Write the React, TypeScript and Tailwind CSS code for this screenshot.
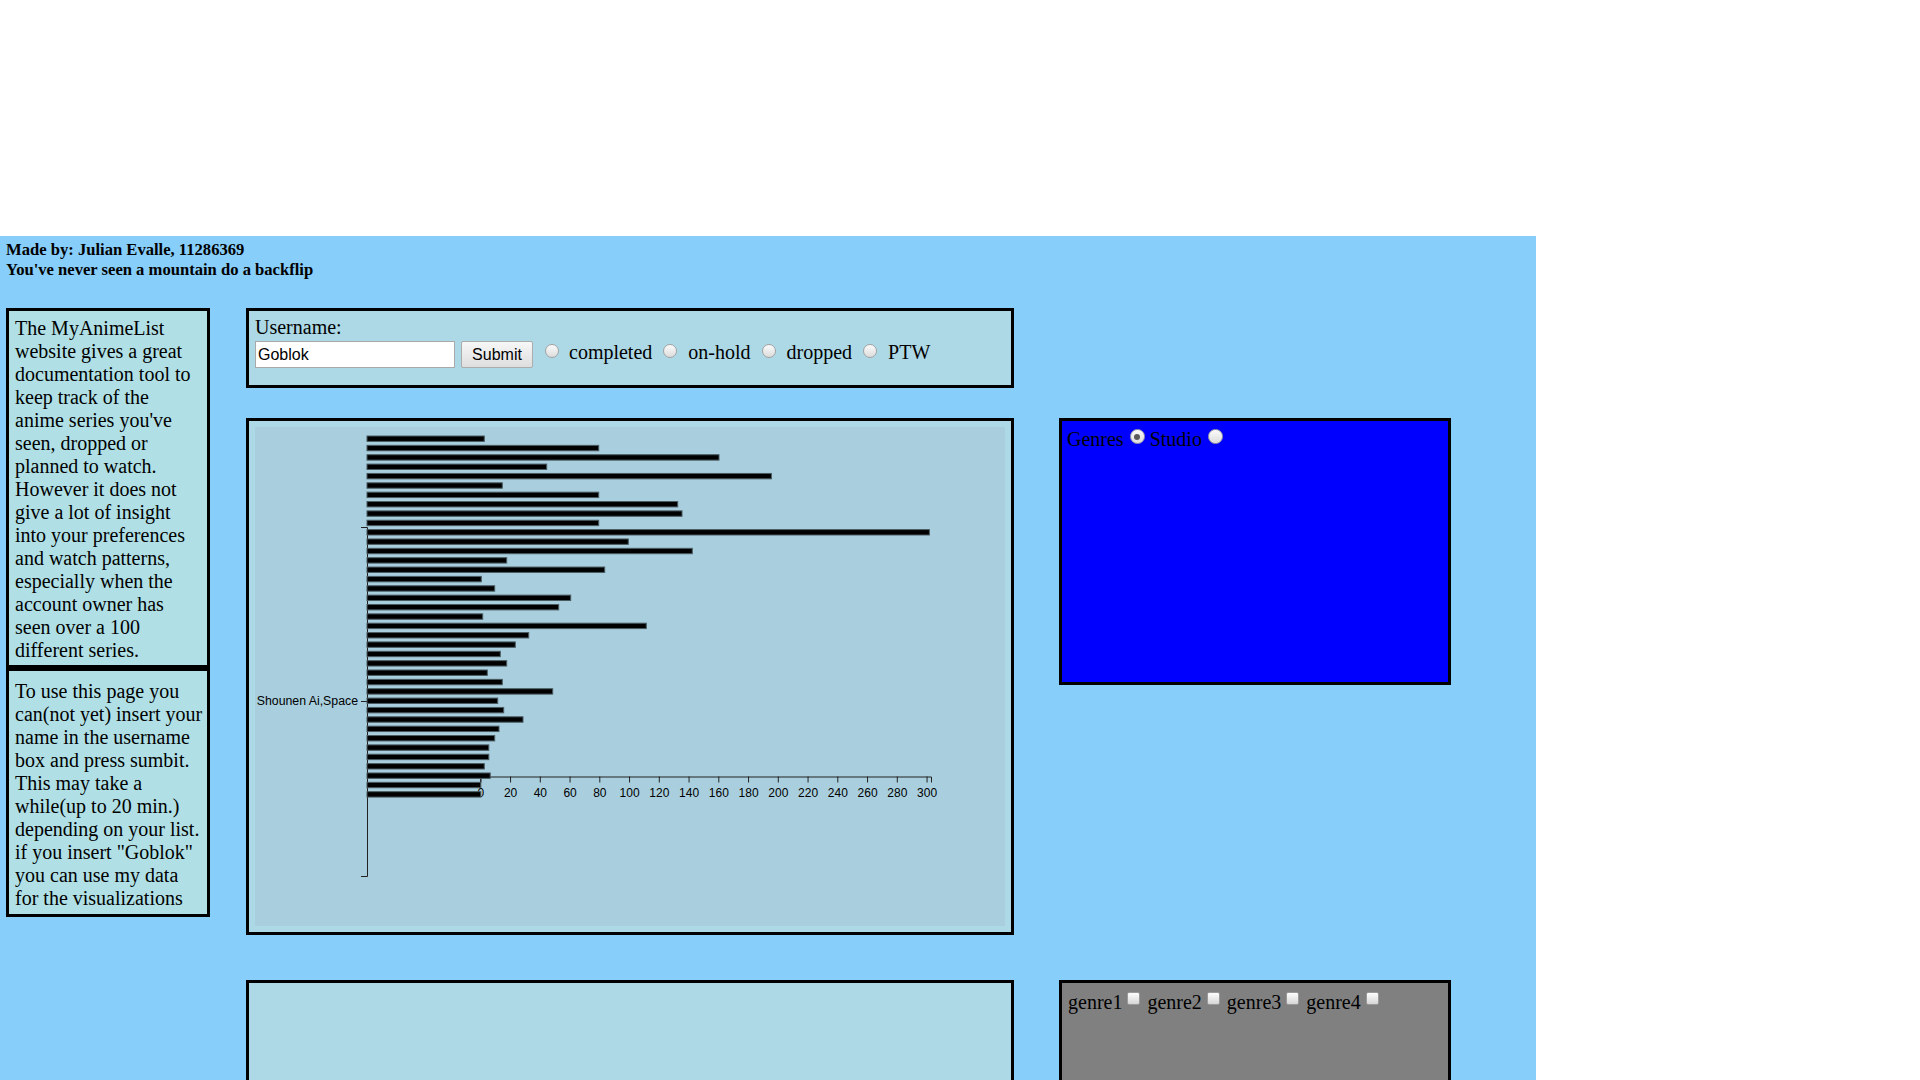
import React from "react";

const box1 = [
  "The MyAnimeList",
  "website gives a great",
  "documentation tool to",
  "keep track of the",
  "anime series you've",
  "seen, dropped or",
  "planned to watch.",
  "However it does not",
  "give a lot of insight",
  "into your preferences",
  "and watch patterns,",
  "especially when the",
  "account owner has",
  "seen over a 100",
  "different series.",
];

const box2 = [
  "To use this page you",
  "can(not yet) insert your",
  "name in the username",
  "box and press sumbit.",
  "This may take a",
  "while(up to 20 min.)",
  "depending on your list.",
  'if you insert "Goblok"',
  "you can use my data",
  "for the visualizations",
];

const barWidths = [
  117.3, 231.7, 352, 179.7, 404.4, 135.3, 231.7, 310.7, 315, 231.7, 562.4, 261.3,
  325.3, 139.7, 237.7, 114.3, 127.7, 203.7, 191.7, 115.7, 279.3, 161.7, 148.3,
  133.3, 139.7, 120.3, 135.3, 185.7, 130.7, 136.7, 156, 132, 127.7, 121.8, 121.8,
  117.3, 123.2, 113.8, 113.8,
];

function Radio({ checked = false, big = false, className = "" }: { checked?: boolean; big?: boolean; className?: string }) {
  return (
    <span
      className={
        (big ? "w-[15px] h-[15px] " : "w-[14px] h-[14px] ") +
        "shrink-0 inline-flex items-center justify-center rounded-full border border-[#a3a3a3] bg-[linear-gradient(180deg,#fbfbfb,#dcdcdc)] " +
        className
      }
    >
      {checked && <span className="w-[6px] h-[6px] rounded-full bg-[#5a5a5a]" />}
    </span>
  );
}

function Checkbox({ className = "" }: { className?: string }) {
  return (
    <span
      className={
        "shrink-0 inline-block w-[13px] h-[13px] rounded-[2px] border border-[#9a9a9a] bg-[linear-gradient(180deg,#fdfdfd,#d6d6d6)] " +
        className
      }
    />
  );
}

function Chart() {
  const ticks = Array.from({ length: 16 }, (_, k) => k * 20);
  const x0 = 225.8;
  const step = 29.75;
  return (
    <svg width={750} height={499} className="block bg-[#a9cfde]" style={{ fontFamily: '"Liberation Sans", Arial, sans-serif' }}>
      {/* y axis */}
      <g transform="translate(112,0)">
        <path d="M-6,100.5H0.5V449.5H-6" fill="none" stroke="#222" strokeWidth={1} />
        <line x1={-6} x2={0} y1={274.5} y2={274.5} stroke="#222" strokeWidth={1} />
        <text x={-9} y={274.5} dy="0.32em" textAnchor="end" fontSize={12.3} fill="#000">
          Shounen Ai,Space
        </text>
      </g>
      {/* x axis */}
      <g transform="translate(0,349.5)">
        <path d={`M${x0},6V0.5H676.5V6`} fill="none" stroke="#222" strokeWidth={1} />
        {ticks.map((t, k) => (
          <g key={t} transform={`translate(${x0 + k * step},0)`}>
            <line y1={0} y2={6} stroke="#222" strokeWidth={1} />
            <text y={12} dy="0.71em" textAnchor="middle" fontSize={12} fill="#000">
              {t}
            </text>
          </g>
        ))}
      </g>
      {/* bars */}
      {barWidths.map((w, i) => (
        <rect key={i} x={112} y={9 + i * 9.36} width={w} height={5.4} fill="#000" stroke="#4b5b62" strokeWidth={1} />
      ))}
    </svg>
  );
}

export default function App() {
  return (
    <div
      className="w-[1920px] h-[1080px] bg-white text-black overflow-hidden"
      style={{ fontFamily: '"Liberation Serif", "Times New Roman", serif' }}
    >
      <div className="h-[236px]" />
      <div className="w-[1536px] h-[844px] bg-[#87cefa] overflow-hidden">
        <div className="pt-[4px] pl-[6px] text-[16.6px] leading-[20px] font-bold">
          <div>Made by: Julian Evalle, 11286369</div>
          <div>You've never seen a mountain do a backflip</div>
        </div>

        <div className="mt-[28px] flex items-start">
          {/* left column */}
          <div className="ml-[6px] w-[204px] flex flex-col text-[20px] leading-[23px]">
            <div className="border-[3px] border-black bg-[#b0e0e6] pt-[6px] pb-[3px] pl-[6px]">
              {box1.map((l) => (
                <div key={l} className="whitespace-nowrap">
                  {l}
                </div>
              ))}
            </div>
            <div className="border-[3px] border-black bg-[#b0e0e6] pt-[9px] pb-[4px] pl-[6px]">
              {box2.map((l) => (
                <div key={l} className="whitespace-nowrap">
                  {l}
                </div>
              ))}
            </div>
          </div>

          {/* middle column */}
          <div className="ml-[36px] w-[768px] flex flex-col">
            <div className="h-[80px] border-[3px] border-black bg-[#add8e6] pt-[5px] pl-[6px] text-[20px] leading-[23px]">
              <div>Username:</div>
              <div className="mt-[2px] flex items-center h-[27px]">
                <input
                  readOnly
                  defaultValue="Goblok"
                  className="w-[200px] h-[27px] border border-[#a9a9a9] bg-white px-[2px] text-[16px] outline-none"
                  style={{ fontFamily: '"Liberation Sans", Arial, sans-serif' }}
                />
                <button
                  className="ml-[6px] w-[72px] h-[27px] rounded-[2px] border border-[#acacac] bg-[linear-gradient(180deg,#f7f7f7,#dedede)] text-[16px] leading-[20px]"
                  style={{ fontFamily: '"Liberation Sans", Arial, sans-serif' }}
                >
                  Submit
                </button>
                <Radio className="ml-[12px] mb-[7px]" />
                <span className="ml-[10px] mb-[4px]">completed</span>
                <Radio className="ml-[11px] mb-[7px]" />
                <span className="ml-[11px] mb-[4px]">on-hold</span>
                <Radio className="ml-[11px] mb-[7px]" />
                <span className="ml-[11px] mb-[4px]">dropped</span>
                <Radio className="ml-[11px] mb-[7px]" />
                <span className="ml-[11px] mb-[4px]">PTW</span>
              </div>
            </div>

            <div className="mt-[30px] border-[3px] border-black bg-[#add8e6] p-[6px]">
              <Chart />
            </div>

            <div className="mt-[45px] h-[300px] border-[3px] border-black bg-[#add8e6]" />
          </div>

          {/* right column */}
          <div className="ml-[45px] w-[392px] flex flex-col">
            <div className="mt-[110px] h-[267px] border-[3px] border-black bg-[#0000ff] pt-[7px] pl-[5px] text-[20px] leading-[23px]">
              <div className="flex items-center">
                <span>Genres</span>
                <Radio big checked className="ml-[6px] mb-[6px]" />
                <span className="ml-[5px]">Studio</span>
                <Radio big className="ml-[6px] mb-[6px]" />
              </div>
            </div>

            <div className="mt-[295px] h-[300px] border-[3px] border-black bg-[#808080] pt-[8px] pl-[6px] text-[20px] leading-[23px]">
              <div className="flex items-center">
                <span>genre1</span>
                <Checkbox className="ml-[5px] mr-[7px] mb-[8px]" />
                <span>genre2</span>
                <Checkbox className="ml-[5px] mr-[7px] mb-[8px]" />
                <span>genre3</span>
                <Checkbox className="ml-[5px] mr-[7px] mb-[8px]" />
                <span>genre4</span>
                <Checkbox className="ml-[5px] mr-[7px] mb-[8px]" />
              </div>
            </div>
          </div>
        </div>
      </div>
    </div>
  );
}
